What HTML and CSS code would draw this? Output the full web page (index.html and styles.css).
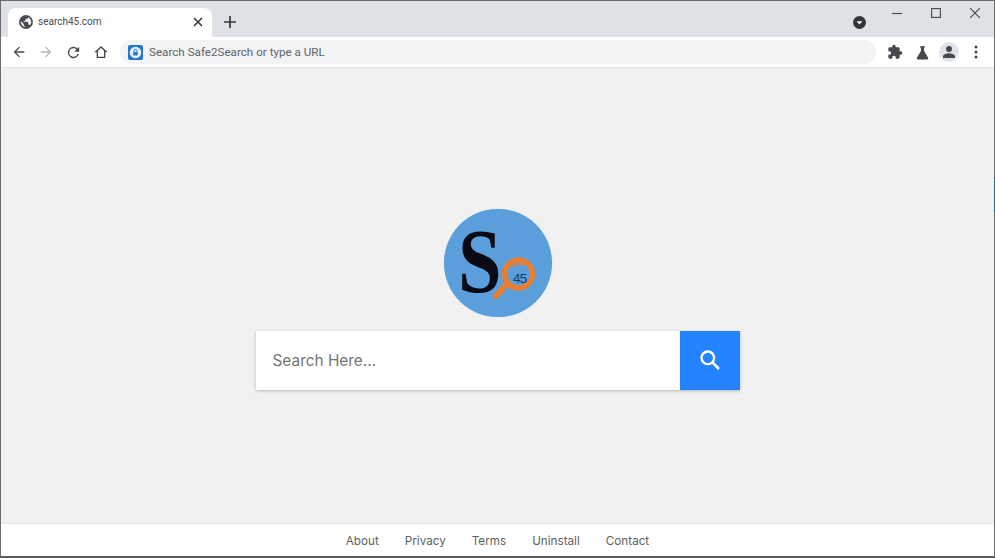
FILE: index.html
```html
<!DOCTYPE html>
<html lang="en">
<head>
<meta charset="utf-8">
<title>search45.com</title>
<link rel="stylesheet" href="styles.css">
</head>
<body>
<div class="window">
  <header class="tabstrip">
    <div class="tab">
      <svg class="tab-globe" viewBox="0 0 24 24" width="16" height="16"><path fill="#45484c" stroke="#45484c" stroke-width=".8" d="M12 2a10 10 0 1 0 0 20 10 10 0 0 0 0-20zM4 12c0-.6.1-1.200.2-1.800L9 15v1c0 1.100.9 2 2 2v2c-3.900-.5-7-3.900-7-8zm13.900 5.400c-.3-.8-1-1.400-1.900-1.400h-1v-3c0-.6-.4-1-1-1H8v-2h2c.6 0 1-.4 1-1V7h2c1.100 0 2-.9 2-2v-.4c2.900 1.200 5 4 5 7.400 0 2.100-.8 4-2.100 5.400z"/></svg>
      <span class="tab-title">search45.com</span>
      <svg class="tab-close" viewBox="0 0 10 10" width="10" height="10"><path d="M1 1l8 8M9 1l-8 8" stroke="#35383c" stroke-width="1.600" fill="none"/></svg>
    </div>
    <svg class="new-tab" viewBox="0 0 12 12" width="12" height="12"><path d="M6 0v12M0 6h12" stroke="#35383c" stroke-width="1.700" fill="none"/></svg>
    <div class="strip-right">
      <svg class="tab-search" viewBox="0 0 13 13" width="13" height="13"><circle cx="6.500" cy="6.500" r="6.500" fill="#33363a"/><path d="M3.600 5.200h5.800L6.500 8.600z" fill="#fff"/></svg>
      <div class="win-controls">
        <svg viewBox="0 0 10 10" width="10" height="10"><path d="M0 5.500h10" stroke="#45484c" stroke-width="1.200"/></svg>
        <svg viewBox="0 0 10 10" width="10" height="10"><rect x=".6" y=".6" width="8.800" height="8.800" stroke="#45484c" stroke-width="1.100" fill="none"/></svg>
        <svg viewBox="0 0 10 10" width="10" height="10"><path d="M0 0l10 10M10 0L0 10" stroke="#45484c" stroke-width="1.100" fill="none"/></svg>
      </div>
    </div>
  </header>

  <nav class="toolbar">
    <div class="nav-buttons">
      <svg viewBox="0 0 24 24" width="16" height="16"><path fill="#45484c" d="M20 11H7.800l5.600-5.600L12 4l-8 8 8 8 1.400-1.400L7.800 13H20z"/></svg>
      <svg viewBox="0 0 24 24" width="16" height="16"><path fill="#b4b7ba" d="M4 11h12.200l-5.600-5.600L12 4l8 8-8 8-1.400-1.400 5.600-5.600H4z"/></svg>
      <svg viewBox="0 0 24 24" width="17" height="17"><path fill="#45484c" d="M17.650 6.350A8 8 0 1 0 19.730 14h-2.080A6 6 0 1 1 12 6c1.660 0 3.140.69 4.220 1.780L13 11h7V4z"/></svg>
      <svg viewBox="0 0 24 24" width="16" height="16"><path fill="none" stroke="#45484c" stroke-width="2" stroke-linejoin="miter" d="M12 4.500 4.500 11.500H6.500V20h11v-8.500h2z"/></svg>
    </div>
    <div class="omnibox">
      <svg class="omni-icon" viewBox="0 0 15 15" width="15" height="15"><rect width="15" height="15" rx="2" fill="#1f76cc"/><circle cx="7.500" cy="7.500" r="5.800" fill="#e4f0fb"/><rect x="5.200" y="7" width="4.600" height="3.500" rx=".6" fill="#2a78c8"/><path d="M6 7V5.800a1.500 1.500 0 0 1 3 0V7" stroke="#2a78c8" fill="none"/></svg>
      <span class="omni-text">Search Safe2Search or type a URL</span>
    </div>
    <div class="tools">
      <svg viewBox="0 0 24 24" width="16" height="16"><path fill="#45484c" d="M20.500 11H19V7c0-1.100-.9-2-2-2h-4V3.500a2.500 2.500 0 0 0-5 0V5H4c-1.100 0-2 .9-2 2v3.800h1.500a2.700 2.700 0 0 1 0 5.400H2V20c0 1.100.9 2 2 2h3.800v-1.500a2.700 2.700 0 0 1 5.400 0V22H17c1.100 0 2-.9 2-2v-4h1.500a2.500 2.500 0 0 0 0-5z"/></svg>
      <svg viewBox="0 0 24 24" width="15" height="15"><path fill="#45484c" d="M8 2h8v2h-1.500v5.500L21 20.500c.6 1-.1 2.500-1.400 2.500H4.400C3.100 23 2.400 21.500 3 20.500L9.500 9.500V4H8z"/></svg>
      <div class="avatar">
        <svg viewBox="0 0 24 24" width="16" height="16"><path fill="#45484c" d="M12 12a4.500 4.500 0 1 0 0-9 4.500 4.500 0 0 0 0 9zm0 2c-3.300 0-9 1.600-9 4.800V21h18v-2.200c0-3.200-5.700-4.800-9-4.800z"/></svg>
      </div>
      <svg viewBox="0 0 4 14" width="4" height="14"><circle cx="2" cy="2" r="1.500" fill="#45484c"/><circle cx="2" cy="7" r="1.500" fill="#45484c"/><circle cx="2" cy="12" r="1.500" fill="#45484c"/></svg>
    </div>
  </nav>

  <main class="content">
    <div class="logo">
      <span class="logo-s">S</span>
      <svg class="logo-glass" viewBox="0 0 50 50" width="50" height="50">
        <path d="M15 33 6 43" stroke="#ea7d2f" stroke-width="6" stroke-linecap="round"/>
        <circle cx="28.500" cy="21" r="14" fill="none" stroke="#ea7d2f" stroke-width="5.500"/>
        <path d="M22 14a10 10 0 0 1 11-2" fill="none" stroke="#ea7d2f" stroke-width="1.500"/>
      </svg>
      <span class="logo-num">45</span>
    </div>
    <form class="search">
      <span class="search-field">Search Here...</span>
      <button class="search-btn" type="button" aria-label="Search">
        <svg viewBox="0 0 24 24" width="24" height="24"><circle cx="9.800" cy="9.800" r="6.300" fill="none" stroke="#fff" stroke-width="2.300"/><path d="m14.500 14.500 6.500 6.500" stroke="#fff" stroke-width="2.500" fill="none"/></svg>
      </button>
    </form>
  </main>

  <footer class="footer">
    <a>About</a><a>Privacy</a><a>Terms</a><a>Uninstall</a><a>Contact</a>
  </footer>
  <div class="edge-mark"></div>
</div>
</body>
</html>
```

FILE: styles.css
```css
* { box-sizing: border-box; }
html, body { margin: 0; height: 100%; overflow: hidden; }
.window {
  position: relative;
  width: 995px; height: 558px;
  display: flex; flex-direction: column;
  border: 1px solid #6a6c6e;
  border-bottom-width: 2px;
  border-bottom-color: #5c5c5c;
  background: #f1f1f1;
  font-family: Roboto, "Liberation Sans", sans-serif;
}
.edge-mark {
  position: absolute; right: -1px; top: 176px;
  width: 1px; height: 35px;
  background: #2d6a70;
}
.tabstrip {
  height: 36px; flex: none;
  background: #dee1e6;
  display: flex; align-items: flex-end;
  padding-left: 7px;
}
.tab {
  width: 204px; height: 29px;
  background: #fff;
  border-radius: 8px 8px 0 0;
  display: flex; align-items: center;
  padding: 0 9px 2px 10px;
}
.tab-title { margin-left: 4px; flex: 1; font-size: 10px; color: #4a4d50; }
.new-tab { margin: 0 0 9px 12px; }
.strip-right { margin-left: auto; display: flex; align-self: stretch; }
.tab-search { margin: 15px 26px 0 0; }
.win-controls { display: flex; gap: 29px; padding: 7px 14px 0 0; align-items: flex-start; }
.toolbar {
  height: 31px; flex: none;
  background: #fff;
  border-bottom: 1px solid #e0e2e5;
  display: flex; align-items: center;
}
.nav-buttons { display: flex; align-items: center; gap: 11px; padding-left: 10px; width: 119px; }
.omnibox {
  width: 756px; height: 24px;
  background: #f1f3f4;
  border-radius: 12px;
  display: flex; align-items: center;
  padding-left: 8px;
}
.omni-text { margin-left: 6px; font-size: 11.650px; color: #606368; }
.tools { display: flex; align-items: center; padding-left: 11px; gap: 12px; }
.avatar {
  width: 20px; height: 20px; border-radius: 50%;
  background: #dfe3ea;
  display: flex; align-items: center; justify-content: center;
  margin-left: -3px;
}
.tools > svg:last-child { margin-left: 3px; }
.content {
  flex: 1;
  background: #f1f1f1;
  display: flex; flex-direction: column; align-items: center;
  padding-top: 140px;
}
.logo {
  position: relative;
  width: 108px; height: 108px;
  margin: 1px 0 0 1px;
  border-radius: 50%;
  background: #5a9fdc;
  box-shadow: 0 0 1px #9cc8ee;
}
.logo-s {
  position: absolute; left: 14px; top: 3px;
  font: bold 91px/100px "Liberation Serif", serif;
  color: #0a0a14;
  transform: scaleX(.86);
  transform-origin: left center;
}
.logo-glass { position: absolute; left: 46px; top: 44px; }
.logo-num {
  position: absolute; left: 69px; top: 62px;
  font: 13.500px/16px "Liberation Sans", sans-serif;
  letter-spacing: -.7px;
  color: #123a66;
}
.search {
  width: 484px; height: 59px;
  margin-top: 14px;
  display: flex;
  background: #fff;
  box-shadow: 0 1px 3px rgba(0, 0, 0, .25);
}
.search-field {
  flex: 1; padding-left: 17px;
  display: flex; align-items: center;
  font: 15.400px Inter, "Open Sans", sans-serif;
  color: #757575;
}
.search-btn {
  width: 60px; border: 0; padding: 0 0 2px;
  background: #2483ff;
  display: flex; align-items: center; justify-content: center;
}
.footer {
  height: 33px; flex: none;
  background: #fff;
  border-top: 1px solid #e8e8e8;
  display: flex; align-items: center; justify-content: center;
  padding-top: 2px;
  gap: 26px;
  font: 11.700px Inter, "Open Sans", sans-serif;
  color: #5f5f5f;
}
```
